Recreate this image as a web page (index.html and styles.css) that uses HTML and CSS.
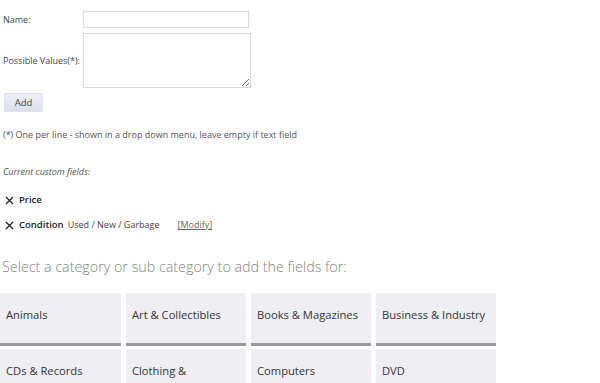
FILE: index.html
```html
<!DOCTYPE html>
<html lang="en">
<head>
  <meta charset="UTF-8">
  <title>Custom Fields</title>
  <link rel="stylesheet" href="styles.css">
</head>
<body>
  <div class="page">
    <form class="field-form">
      <label for="name">Name:</label>
      <input type="text" id="name" class="name-input">
      <label for="values">Possible Values(*):</label>
      <textarea id="values" class="values-input"></textarea>
    </form>
    <button class="add-btn" type="button">Add</button>

    <p class="note">(*) One per line - shown in a drop down menu, leave empty if text field</p>

    <p class="current-title">Current custom fields:</p>

    <ul class="field-list">
      <li>
        <svg class="remove" width="9" height="9" viewBox="0 0 9 9"><path d="M1 1L8 8M8 1L1 8" stroke="#222" stroke-width="1.3" fill="none"/></svg>
        <b>Price</b>
      </li>
      <li>
        <svg class="remove" width="9" height="9" viewBox="0 0 9 9"><path d="M1 1L8 8M8 1L1 8" stroke="#222" stroke-width="1.3" fill="none"/></svg>
        <b>Condition</b> Used / New / Garbage <a href="#" class="modify">[Modify]</a>
      </li>
    </ul>

    <h2 class="cat-title">Select a category or sub category to add the fields for:</h2>

    <div class="cat-grid">
      <a href="#" class="cat">Animals</a>
      <a href="#" class="cat">Art &amp; Collectibles</a>
      <a href="#" class="cat">Books &amp; Magazines</a>
      <a href="#" class="cat">Business &amp; Industry</a>
      <a href="#" class="cat">CDs &amp; Records</a>
      <a href="#" class="cat">Clothing &amp;</a>
      <a href="#" class="cat">Computers</a>
      <a href="#" class="cat">DVD</a>
    </div>
  </div>
</body>
</html>
```

FILE: styles.css
```css
* {
  margin: 0;
  padding: 0;
  box-sizing: border-box;
}

body {
  font-family: 'Open Sans', 'Noto Sans', sans-serif;
  font-size: 9px;
  line-height: 14px;
  color: #444;
  background: #fff;
}

.page {
  padding: 0 0 0 3px;
}

.field-form {
  display: grid;
  grid-template-columns: 80px auto;
  align-items: center;
  justify-content: start;
  row-gap: 5px;
  padding-top: 11px;
}

.field-form label {
  color: #444;
  white-space: nowrap;
}

.name-input {
  width: 166px;
  height: 17px;
  border: 1px solid #d9d9d9;
}

.values-input {
  width: 168px;
  height: 55px;
  border: 1px solid #d9d9d9;
  resize: both;
  font-family: inherit;
}

.add-btn {
  display: block;
  margin-top: 5px;
  margin-left: 1px;
  width: 39px;
  height: 19px;
  border: 1px solid #e2e4ec;
  background: linear-gradient(#eef0f7, #dcdfea);
  font-family: inherit;
  font-size: 9.5px;
  color: #444;
}

.note {
  margin-top: 16px;
  color: #555;
}

.current-title {
  margin-top: 23px;
  font-style: italic;
  color: #555;
}

.field-list {
  list-style: none;
  margin-top: 14px;
  color: #444;
}

.field-list li {
  display: flex;
  align-items: center;
  gap: 4px;
  margin-bottom: 11px;
  padding-left: 2px;
}

.field-list li:last-child {
  margin-bottom: 0;
}

.field-list b {
  color: #222;
  font-weight: 600;
  font-size: 9.5px;
}

.remove {
  margin-right: 1px;
}

.modify {
  color: #666;
  margin-left: 14px;
}

.cat-title {
  margin: 25px 0 0 -1px;
  font-size: 14.3px;
  line-height: 20px;
  font-weight: 300;
  color: #838383;
}

.cat-grid {
  display: grid;
  grid-template-columns: 121px repeat(3, 120px);
  column-gap: 5px;
  row-gap: 3px;
  margin: 16px 0 0 -3px;
}

.cat {
  display: flex;
  align-items: center;
  height: 53px;
  padding: 0 0 6px 6px;
  background: #efeff3;
  border-bottom: 3px solid #9a9a9e;
  color: #333;
  font-size: 11.2px;
  text-decoration: none;
}
```
